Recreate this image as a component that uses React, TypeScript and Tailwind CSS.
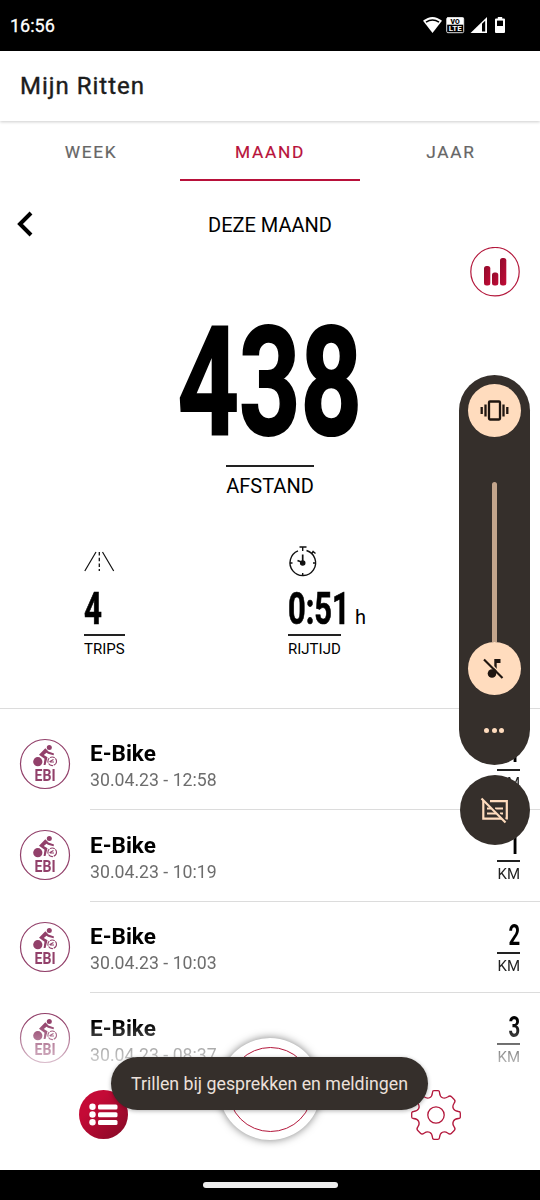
import React from "react";

type Trip = { date: string; km: string };

const trips: Trip[] = [
  { date: "30.04.23 - 12:58", km: "1" },
  { date: "30.04.23 - 10:19", km: "1" },
  { date: "30.04.23 - 10:03", km: "2" },
  { date: "30.04.23 - 08:37", km: "3" },
];

function StatusBar() {
  return (
    <div className="flex h-[50.5px] shrink-0 items-center bg-black pl-[10px] pr-[34px] text-white">
      <span className="flex-1 pt-[2px] text-[18px] leading-none [-webkit-text-stroke:0.3px_currentColor]">16:56</span>
      <svg width="84" height="20" viewBox="422 15 84 20" fill="#fff">
        <path d="M423 20.8Q432.5 13.2 442 20.8L432.5 33Z" />
        <path d="M426 22.2Q432.5 17.8 439 22.2" fill="none" stroke="#000" strokeWidth="1.5" />
        <rect x="446.7" y="17.7" width="17" height="15" rx="1.2" fill="#000" stroke="#ddd" strokeWidth="1" />
        <path d="M447 17.5h16.5v7.200h-16.500z" />
        <text x="455.2" y="23.900" textAnchor="middle" fill="#000" fontFamily="Roboto" fontWeight="900" fontSize="6.8">VO</text>
        <text x="455.2" y="31.400" textAnchor="middle" fontFamily="Roboto" fontWeight="700" fontSize="7.400" textLength="13" lengthAdjust="spacingAndGlyphs">LTE</text>
        <path d="M470.5 33L487 17v16z" />
        <path d="M482 23.8l3.2-3v10.8H482z" fill="#000" />
        <path d="M497.8 17h4.4v1.5h1.8a1 1 0 0 1 1 1v12.5a1 1 0 0 1-1 1h-8a1 1 0 0 1-1-1V19.500a1 1 0 0 1 1-1h1.800z" />
        <path d="M497 20.600h6v5.400h-6z" fill="#000" />
      </svg>
    </div>
  );
}

function Tabs() {
  return (
    <div className="grid h-[60px] grid-cols-3 text-center text-[17.3px] leading-[54px] tracking-[1.700px] text-[#666] [-webkit-text-stroke:0.2px_currentColor]">
      <div className="pl-[2px] pt-[3.500px]">WEEK</div>
      <div className="h-[60px] border-b-[2.500px] border-[#b8113a] pt-[3.500px] text-[#b8113a]">MAAND</div>
      <div className="pl-[2px] pt-[3.500px]">JAAR</div>
    </div>
  );
}

function BikeBadge() {
  return (
    <svg width="52" height="52" viewBox="0 0 52 52" className="mb-px shrink-0" fill="#92406a">
      <circle cx="26" cy="26" r="24.500" fill="none" stroke="#92406a" strokeWidth="1.200" />
      <circle cx="30.300" cy="9.500" r="2.500" />
      <circle cx="18.800" cy="23.700" r="4.600" />
      <circle cx="33.200" cy="23.300" r="4.300" fill="none" stroke="#92406a" strokeWidth="1.100" strokeDasharray="5 0.800" />
      <path d="M20 16.800L26.300 10.300L29.500 13.500L35 15.500L34.600 17.200L29 15.800L27.500 14.800L24.800 17L28.500 19.200L26.500 27H24.600L25.500 20.700Z" />
      <path d="M30.500 23.700l4-2.300M31 24h4" stroke="#92406a" strokeWidth="1.200" />
      <text x="26" y="42.800" textAnchor="middle" fontFamily="Roboto" fontWeight="700" fontSize="16" textLength="21" lengthAdjust="spacingAndGlyphs">EBI</text>
    </svg>
  );
}

function TripRow({ trip }: { trip: Trip }) {
  return (
    <div className="flex h-[91.5px] shrink-0 items-center pl-[19px]">
      <BikeBadge />
      <div className="ml-[19px] flex h-full flex-1 justify-between border-b-[1.5px] border-[#dcdcdc] pr-[20px]">
        <div className="pt-[21.500px]">
          <div className="h-[27px] text-[22.5px] font-bold leading-[27px] text-black">E-Bike</div>
          <div className="h-[27px] text-[17.7px] leading-[27px] text-[#6d6d6d]">{trip.date}</div>
        </div>
        <div className="flex w-[23px] flex-col items-end">
          <div className="h-[50px] origin-right scale-x-[0.68] pt-[17.500px] text-[30px] font-bold leading-[32px] text-black">{trip.km}</div>
          <div className="h-[2px] w-full bg-[#222]" />
          <div className="text-[15px] leading-[25px] text-[#222]">KM</div>
        </div>
      </div>
    </div>
  );
}

function Stats() {
  return (
    <div className="grid grid-cols-[204px_1fr] pl-[84px] pt-[41px]">
      <div>
        <svg width="32" height="30" viewBox="0 0 32 30" fill="none" stroke="#111" strokeWidth="1.200">
          <path d="M12 5L.8 24M18.500 5L29.700 24" />
          <path d="M15.300 5v19" strokeDasharray="3.500 2.200" strokeWidth="1.300" />
        </svg>
        <div className="mt-[6px] h-[51px] text-[44px] font-bold leading-[52px] [-webkit-text-stroke:0.7px_currentColor]">
          <span className="inline-block origin-left scale-x-[0.71]">4</span>
        </div>
        <div className="h-[2px] w-[41px] bg-[#222]" />
        <div className="text-[15px] leading-[26px]">TRIPS</div>
      </div>
      <div>
        <svg width="32" height="32" viewBox="0 0 32 32" className="-mt-px -mb-px" fill="none" stroke="#111" strokeWidth="1.400">
          <path d="M18.500 4.500A12.800 12.800 0 1 1 10 4.900M11.500 1h7M14.700 1v4M24.500 5l3 2.500M23 8l2.800-2.800M14.700 27v3M2 17h2.500M25 17h2.500" />
          <path d="M14.700 8.500v8L9.500 14.500" strokeWidth="1.700" />
          <circle cx="14.700" cy="17" r="2.100" fill="#111" />
        </svg>
        <div className="mt-[6px] flex h-[51px] leading-[52px]">
          <div className="w-[67px] text-[44px] font-bold [-webkit-text-stroke:0.7px_currentColor]">
            <span className="inline-block origin-left scale-x-[0.7]">0:51</span>
          </div>
          <span className="pt-[8px] text-[20px]">h</span>
        </div>
        <div className="h-[2px] w-[53px] bg-[#222]" />
        <div className="text-[15px] leading-[26px]">RIJTIJD</div>
      </div>
    </div>
  );
}

function BottomNav() {
  return (
    <div className="relative h-[90px] shrink-0">
      <div className="flex items-start justify-between pl-[79px] pr-[79px] pt-[10px]">
        <svg width="49" height="49" viewBox="0 0 49 49">
          <defs>
            <linearGradient id="nav" x1="0" y1="0" x2="1" y2="1">
              <stop offset="0.300" stopColor="#c40a36" />
              <stop offset="0.900" stopColor="#8c0a28" />
            </linearGradient>
          </defs>
          <circle cx="24.500" cy="24.500" r="24.500" fill="url(#nav)" />
          <g fill="#fff">
            <circle cx="13.500" cy="16.800" r="3.200" />
            <circle cx="13.500" cy="24.500" r="3.200" />
            <circle cx="13.500" cy="32.200" r="3.200" />
            <rect x="19" y="14.500" width="19.500" height="5" rx="1.500" />
            <rect x="19" y="22.200" width="19.500" height="5" rx="1.500" />
            <rect x="19" y="29.900" width="19.500" height="5" rx="1.500" />
          </g>
        </svg>
        <svg width="50" height="50" viewBox="-25 -25 50 50" fill="none" stroke="#b3173b" strokeWidth="1.300" strokeLinejoin="round">
          <circle r="8.200" />
          <path d="M-3.500 -22.500Q-3.500 -24.300 -2 -24.300H2Q3.500 -24.300 3.500 -22.500C4 -17 8 -15.500 12 -18.200Q14 -19.800 15.500 -18.200L18.200 -15.500Q19.800 -14 18.200 -12C15.500 -8 17 -4 22.500 -3.500Q24.300 -3.500 24.300 -2V2Q24.300 3.500 22.500 3.500C17 4 15.500 8 18.200 12Q19.800 14 18.200 15.500L15.500 18.200Q14 19.800 12 18.200C8 15.500 4 17 3.500 22.500Q3.500 24.300 2 24.300H-2Q-3.500 24.300 -3.500 22.500C-4 17 -8 15.500 -12 18.200Q-14 19.800 -15.500 18.200L-18.200 15.500Q-19.800 14 -18.200 12C-15.500 8 -17 4 -22.500 3.500Q-24.300 3.500 -24.300 2V-2Q-24.300 -3.500 -22.500 -3.500C-17 -4 -15.500 -8 -18.200 -12Q-19.800 -14 -18.200 -15.500L-15.500 -18.200Q-14 -19.800 -12 -18.200C-8 -15.500 -4 -17 -3.500 -22.500Z" />
        </svg>
      </div>
      <div className="absolute left-[219px] top-[-42px] flex h-[102px] w-[102px] items-center justify-center rounded-full bg-white shadow-[0_0_9px_rgba(0,0,0,0.5)]">
        <div className="h-[85px] w-[85px] rounded-full border border-[#b3173b]" />
      </div>
    </div>
  );
}

function VolumePanel() {
  return (
    <div className="absolute left-[458.5px] top-[375px] flex h-[390px] w-[71.5px] flex-col items-center rounded-full bg-[#352f2b] pt-[9px]">
      <div className="h-[53px] w-[53px] rounded-full bg-[#ffdcbe]">
        <svg width="53" height="53" viewBox="0 0 53 53" fill="none" stroke="#1f1611" strokeWidth="2.300">
          <rect x="21" y="17.500" width="11" height="18" rx="1" />
          <path d="M17.500 20.500v12M35.500 20.500v12M13.700 23v7M39.300 23v7" />
        </svg>
      </div>
      <div className="mt-[45px] h-[160px] w-[5px] rounded-t-full bg-[#c3a58c]" />
      <div className="h-[53px] w-[53px] shrink-0 rounded-full bg-[#ffdcbe]">
        <svg width="53" height="53" viewBox="0 0 53 53" fill="#1f1611">
          <path d="M26.300 17h6.200v4h-3.800v10h-2.400z" />
          <circle cx="24" cy="31.500" r="4.300" />
          <path d="M17.500 16.500L36 35" stroke="#ffdcbe" strokeWidth="1.500" />
          <path d="M16 17.500L34.500 36" stroke="#1f1611" strokeWidth="2.200" />
        </svg>
      </div>
      <div className="mt-[32.500px] flex gap-[2.500px]">
        <i className="h-[5px] w-[5px] rounded-full bg-[#ffdcbe]" />
        <i className="h-[5px] w-[5px] rounded-full bg-[#ffdcbe]" />
        <i className="h-[5px] w-[5px] rounded-full bg-[#ffdcbe]" />
      </div>
    </div>
  );
}

function CaptionButton() {
  return (
    <div className="absolute left-[460px] top-[775px] h-[70px] w-[70px] rounded-full bg-[#352f2b]">
      <svg width="70" height="70" viewBox="460 775 70 70" fill="none" stroke="#ffdcbe" strokeWidth="2.200">
        <path d="M490 801.200h16.800v17.300h-1.500M484 801.200h-.7v17.500h19.500" />
        <path d="M487 808.500h4M495 808.500h8M487 813.500h9M500 813.500h3" />
        <path d="M483 798L507 822" stroke="#352f2b" strokeWidth="2" />
        <path d="M481.500 798.500L505.500 822.500" />
      </svg>
    </div>
  );
}

export default function App() {
  return (
    <div className="relative flex h-[1200px] w-[540px] flex-col overflow-hidden bg-white font-['Roboto',sans-serif] text-black">
      <StatusBar />
      <header className="h-[70.5px] shrink-0 pl-[20px] text-[24px] leading-[71px] tracking-[1px] text-[#1c1c1c] shadow-[0_1px_3px_rgba(0,0,0,0.2)] [-webkit-text-stroke:0.4px_currentColor]">
        Mijn Ritten
      </header>
      <Tabs />
      <div className="grid h-[66px] grid-cols-3 items-center pt-[21px] text-center">
        <svg width="16" height="26" viewBox="0 0 16 26" className="mb-px ml-[17px]" fill="none" stroke="#000" strokeWidth="4">
          <path d="M14 2L3 13L14 24" />
        </svg>
        <div className="text-[20px]">DEZE MAAND</div>
      </div>
      <div className="flex h-[50px] justify-end pr-[20px]">
        <svg width="50" height="50" viewBox="0 0 50 50">
          <defs>
            <linearGradient id="bar" x1="0" y1="0" x2="1" y2="1">
              <stop offset="0" stopColor="#8f0c2c" />
              <stop offset="1" stopColor="#c40a36" />
            </linearGradient>
          </defs>
          <circle cx="25" cy="24.700" r="24.200" fill="none" stroke="#b3173b" strokeWidth="1.200" />
          <g fill="url(#bar)">
            <rect x="14" y="19" width="6.300" height="19.500" rx="2.500" />
            <rect x="22" y="25.500" width="6.300" height="13" rx="2.500" />
            <rect x="30" y="11" width="6.300" height="27.500" rx="2.500" />
          </g>
        </svg>
      </div>
      <div className="flex flex-col items-center">
        <div className="h-[168px] scale-x-[0.705] text-[152px] font-bold leading-[173px] [-webkit-text-stroke:2px_currentColor]">438</div>
        <div className="h-[2px] w-[88px] bg-[#222]" />
        <div className="text-[20px] leading-[39px]">AFSTAND</div>
      </div>
      <Stats />
      <div className="mt-auto h-[372px] shrink-0 overflow-hidden border-t-[1.500px] border-[#dcdcdc] pt-[9.500px] [mask-image:linear-gradient(to_bottom,#000_0px,#000_314px,transparent_376px)]">
        {trips.map((trip) => (
          <TripRow key={trip.date} trip={trip} />
        ))}
      </div>
      <BottomNav />
      <div className="flex h-[30px] shrink-0 justify-center bg-black pt-[12px]">
        <div className="h-[6px] w-[135px] rounded-full bg-[#eee]" />
      </div>
      <VolumePanel />
      <CaptionButton />
      <div className="absolute left-[111px] top-[1056.5px] h-[53.5px] w-[317px] whitespace-nowrap rounded-full bg-[#352f2b] text-center text-[17.750px] leading-[55px] text-[#ece0da] shadow-[0_1px_4px_rgba(0,0,0,0.3)]">
        Trillen bij gesprekken en meldingen
      </div>
    </div>
  );
}
